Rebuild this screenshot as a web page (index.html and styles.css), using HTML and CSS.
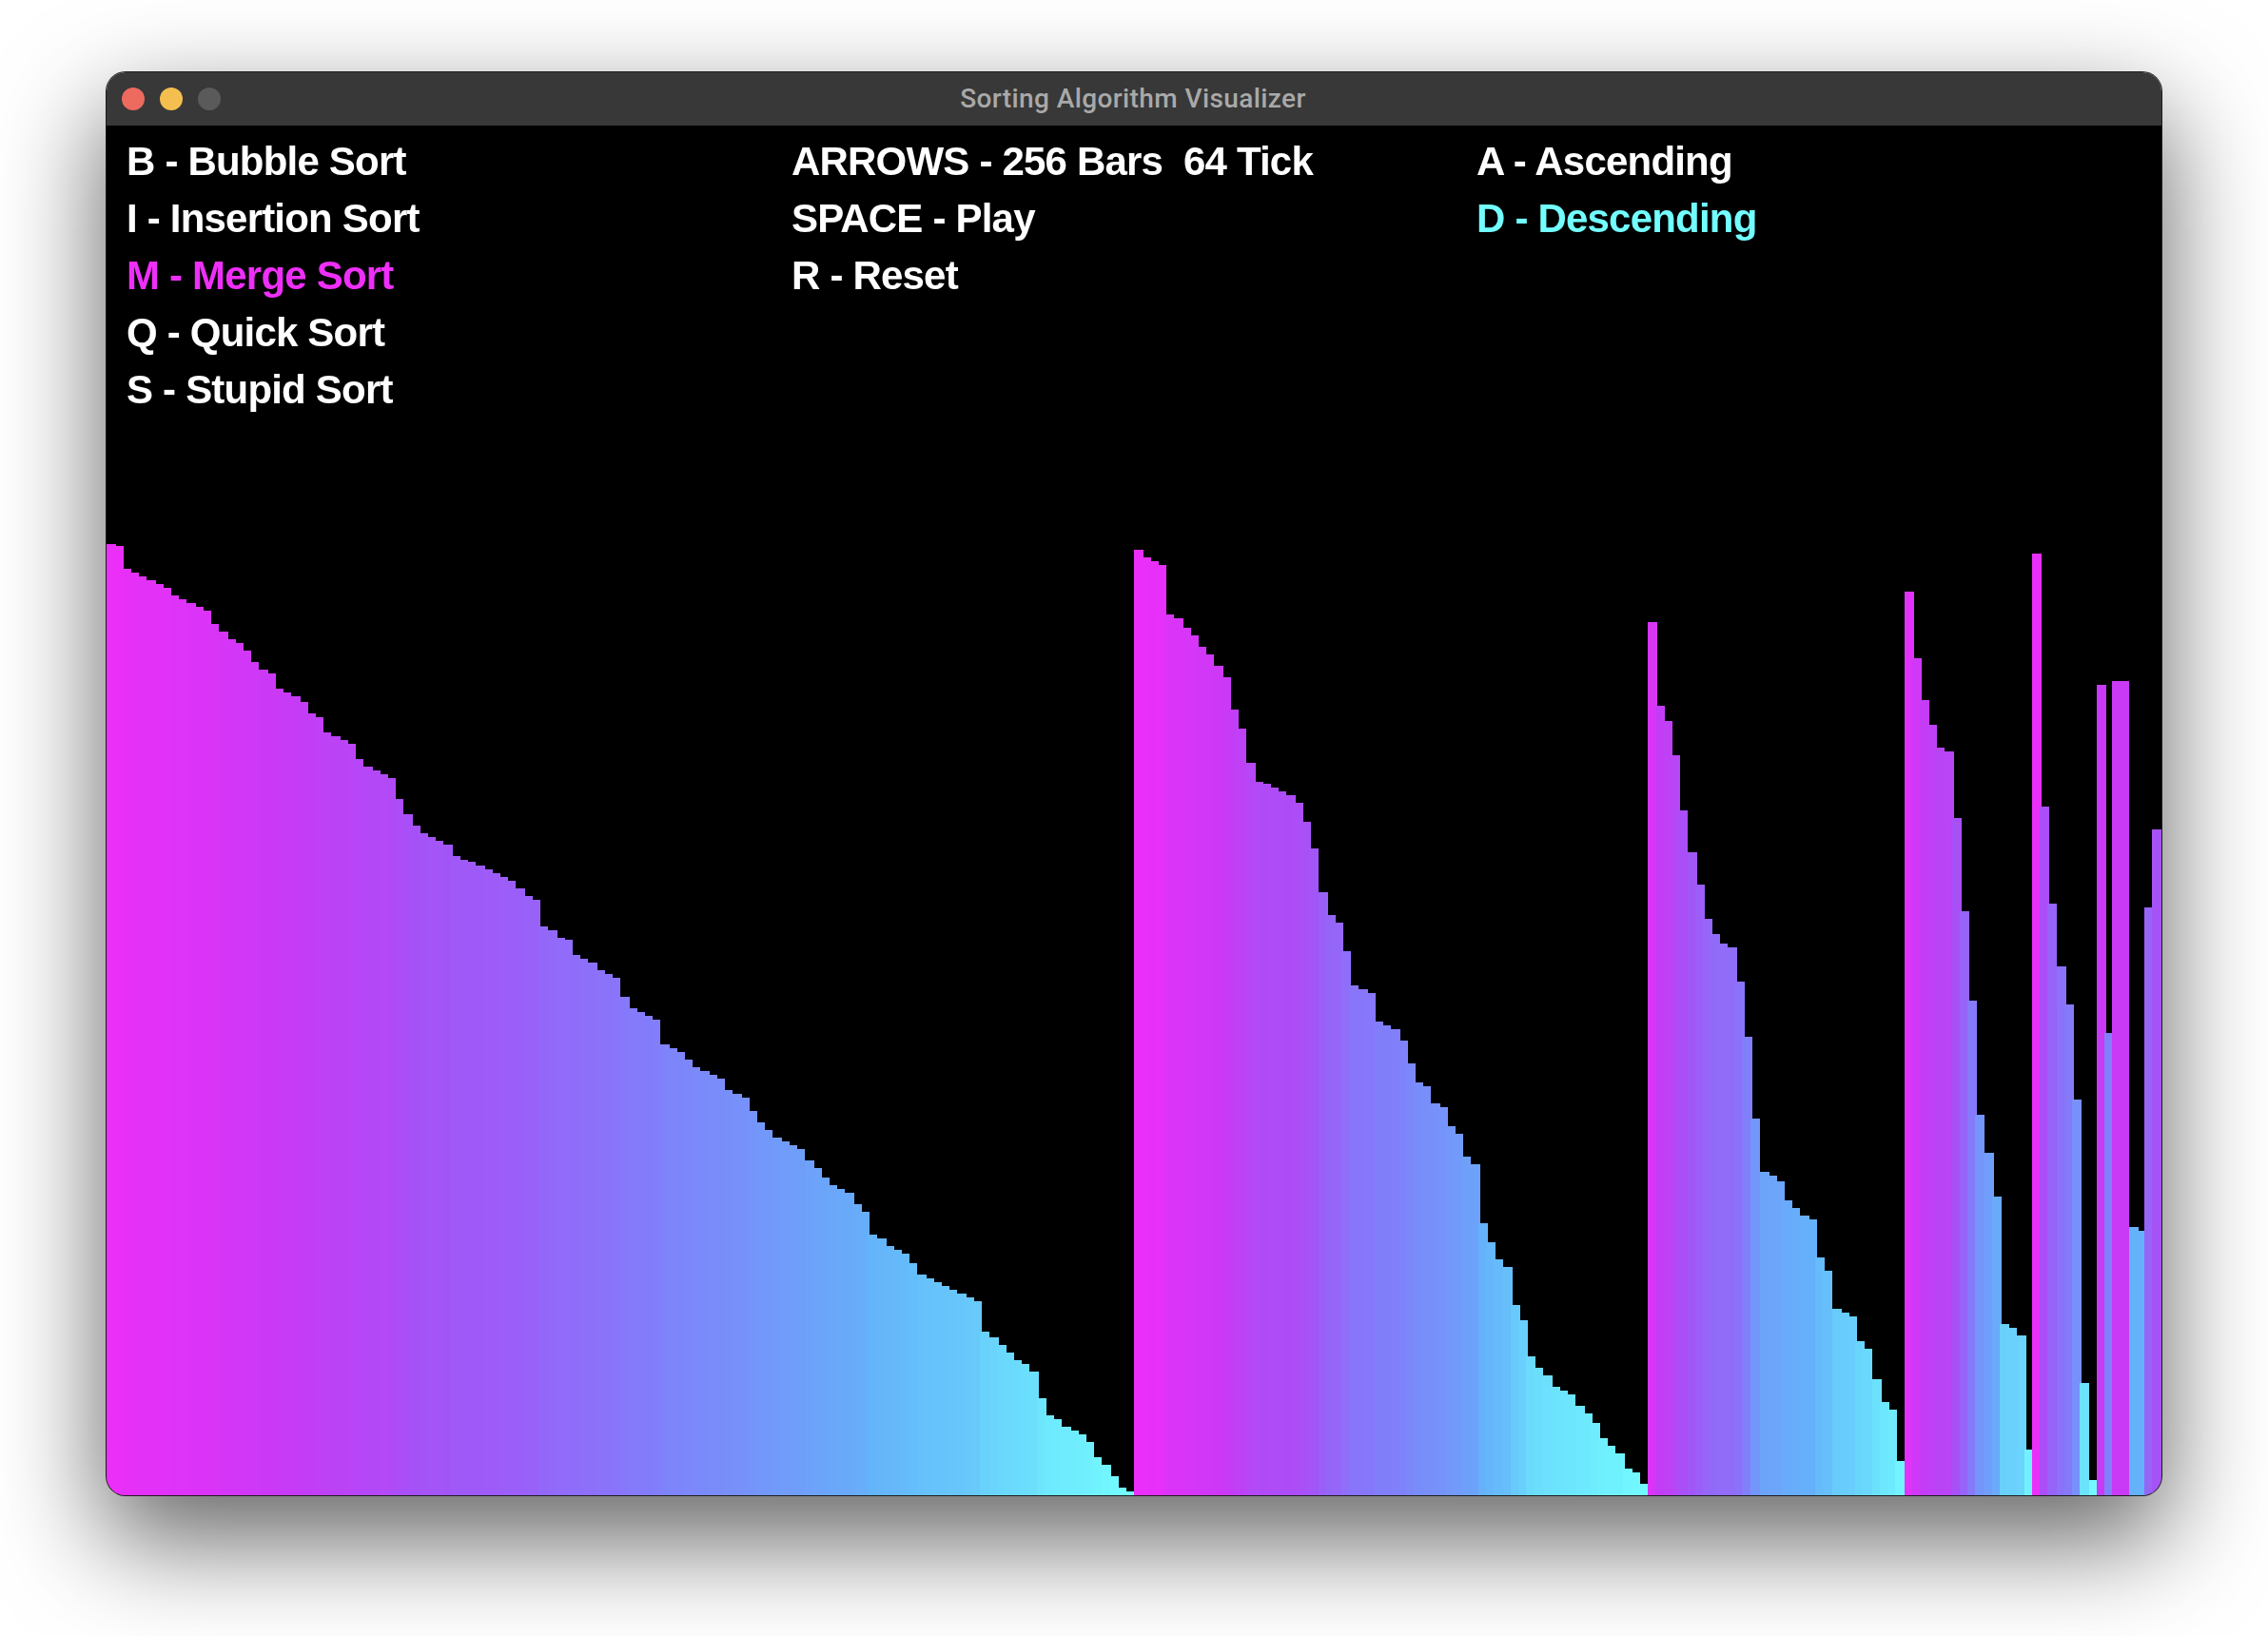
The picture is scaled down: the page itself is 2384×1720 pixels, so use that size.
FILE: index.html
```html
<!DOCTYPE html>
<html lang='en'>
<head>
  <title>Sorting Algorithm Visualizer</title>

  <link rel="stylesheet" href="styles.css">
</head>
<body>
  <div class='window'>
    <div class='titlebar'>
      <div class='lights'>
        <span class='light red'></span>
        <span class='light yellow'></span>
        <span class='light off'></span>
      </div>
      <span class='title'>Sorting Algorithm Visualizer</span>
    </div>

    <div class='screen'>
      <!-- Key bindings -->
      <div class='legend'>
        <div class='column'>
          <div class='line'>B - Bubble Sort</div>
          <div class='line'>I - Insertion Sort</div>
          <div class='line magenta'>M - Merge Sort</div>
          <div class='line'>Q - Quick Sort</div>
          <div class='line'>S - Stupid Sort</div>
        </div>
        <div class='column'>
          <div class='line'>ARROWS - 256 Bars  64 Tick</div>
          <div class='line'>SPACE - Play</div>
          <div class='line'>R - Reset</div>
        </div>
        <div class='column'>
          <div class='line'>A - Ascending</div>
          <div class='line cyan'>D - Descending</div>
        </div>
      </div>

      <!-- Bars get added by script.js -->
      <div class='bars' id='bars'></div>
    </div>
  </div>

  <script src='script.js'></script>
</body>
</html>
```

FILE: styles.css
```css
body {
  margin: 0;
  height: 100vh;
  background-color: white;
  display: flex;
  justify-content: center;
  align-items: flex-start;
  overflow: hidden;
}

.window {
  width: 2160px;
  margin-top: 76px;
  border-radius: 20px;
  overflow: hidden;
  box-shadow: 0 0 0 1px #1c1c1c, 0 44px 110px 4px rgba(0, 0, 0, 0.6);
}

.titlebar {
  height: 56px;
  padding: 0 2px 2px 0;
  box-sizing: border-box;
  background-color: #383838;
  display: flex;
  align-items: center;
  justify-content: center;
  position: relative;
}

.lights {
  position: absolute;
  left: 16px;
  top: 16px;
  display: flex;
  gap: 16px;
}

.light {
  width: 24px;
  height: 24px;
  border-radius: 50%;
}

.red {
  background-color: #ec6a5e;
}

.yellow {
  background-color: #f4bf4f;
}

.off {
  background-color: #5a5a5a;
}

.title {
  color: #a9a9a9;
  font-family: Roboto, sans-serif;
  font-weight: 500;
  font-size: 28px;
  letter-spacing: 0.4px;
}

.screen {
  height: 1440px;
  background-color: black;
  display: flex;
  flex-direction: column;
}

.legend {
  height: 440px;
  box-sizing: border-box;
  padding: 8px 0 0 21px;
  display: grid;
  grid-template-columns: 699px 720px 1fr;
  align-content: start;
  color: white;
  font-family: 'Liberation Sans', Arial, sans-serif;
  font-weight: bold;
  font-size: 42px;
  letter-spacing: -0.8px;
  line-height: 60px;
  filter: blur(0.6px);
}

.line {
  white-space: pre;
}

.magenta {
  color: #ee2ff8;
}

.cyan {
  color: #72fdff;
}

.bars {
  flex: 1;
  display: flex;
  align-items: flex-end;
}

.bar {
  flex: none;
  width: 10px;
}
```

FILE: script.js
```js
// merge sort caught part way: sorted runs of 128, 64, 32, 16, 8, then the unsorted rest
const heights = [
  1000, 998, 974, 970, 966, 962, 958, 954, 946, 942, 938, 934, 930, 916, 908, 900,
  896, 888, 876, 868, 864, 848, 844, 840, 834, 822, 818, 802, 798, 794, 790, 774,
  766, 762, 758, 754, 732, 716, 704, 696, 692, 688, 684, 672, 668, 666, 662, 658,
  654, 650, 646, 638, 630, 626, 598, 594, 586, 584, 568, 564, 560, 552, 548, 544,
  524, 512, 508, 504, 500, 474, 470, 466, 458, 450, 446, 442, 438, 426, 422, 418,
  404, 392, 384, 376, 372, 368, 364, 352, 344, 334, 326, 322, 318, 306, 298, 274,
  270, 262, 258, 254, 244, 232, 228, 224, 220, 216, 212, 208, 204, 172, 166, 158,
  150, 142, 138, 130, 102, 84, 80, 72, 68, 64, 56, 40, 32, 20, 8, 4,

  994, 986, 982, 978, 926, 922, 912, 904, 892, 884, 872, 860, 826, 806, 770, 750,
  748, 744, 740, 736, 728, 708, 680, 634, 610, 602, 572, 536, 532, 528, 498, 494,
  490, 478, 454, 434, 430, 412, 408, 388, 380, 356, 348, 286, 266, 248, 240, 200,
  184, 146, 134, 126, 114, 110, 106, 94, 86, 76, 60, 52, 44, 28, 24, 12,

  918, 830, 814, 778, 720, 676, 642, 606, 590, 580, 576, 540, 482, 396, 340, 336,
  330, 310, 302, 294, 290, 250, 236, 196, 192, 188, 162, 154, 122, 98, 90, 36,

  950, 880, 836, 810, 786, 782, 712, 614, 520, 400, 360, 314, 180, 176, 168, 48,

  990, 724, 622, 556, 516, 416, 118, 16,

  852, 486, 856, 856, 282, 278, 618, 700
];

const stops = [
  [0, 236, 46, 249],
  [0.15, 200, 58, 246],
  [0.3, 165, 82, 247],
  [0.5, 130, 125, 250],
  [0.72, 100, 178, 250],
  [0.88, 108, 226, 253],
  [1, 115, 252, 255]
];

function barColor(height) {
  const t = 1 - height / 1000;
  let n = 0;
  while (n < stops.length - 2 && t > stops[n + 1][0]) {
    n++;
  }
  const a = stops[n];
  const b = stops[n + 1];
  const mix = (t - a[0]) / (b[0] - a[0]);
  const channel = (c) => Math.round(a[c] + (b[c] - a[c]) * mix);
  return `rgb(${channel(1)}, ${channel(2)}, ${channel(3)})`;
}

// every bar is 10px wide and the next one is painted over its right edge
function barLeft(i) {
  return 2 * Math.floor((1080 / heights.length) * i);
}

const barsDiv = document.querySelector('#bars');
heights.forEach((height, i) => {
  const bar = document.createElement('div');
  bar.className = 'bar';
  bar.style.marginRight = `${barLeft(i + 1) - barLeft(i) - 10}px`;
  bar.style.height = `${height}px`;
  bar.style.backgroundColor = barColor(height);
  barsDiv.appendChild(bar);
});
```
